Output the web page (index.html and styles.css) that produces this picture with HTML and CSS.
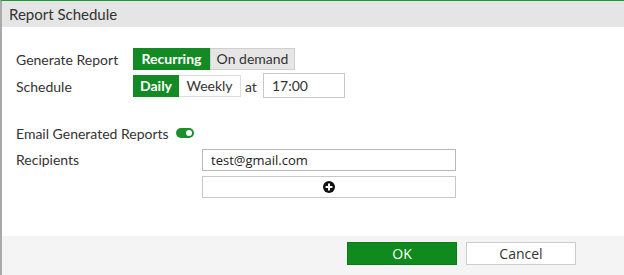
FILE: index.html
```html
<!DOCTYPE html>
<html>
<head>
<meta charset="utf-8">
<link rel="stylesheet" href="styles.css">
</head>
<body>
<div class="dialog">
  <div class="header">Report Schedule</div>
  <div class="content">
    <div class="row">
      <div class="label">Generate Report</div>
      <div class="seg">
        <span class="opt active">Recurring</span><span class="opt grey">On demand</span>
      </div>
    </div>
    <div class="row row2">
      <div class="label">Schedule</div>
      <div class="seg">
        <span class="opt active small">Daily</span><span class="opt white">Weekly</span>
      </div>
      <span class="at">at</span>
      <div class="time">17:00</div>
    </div>
    <div class="row email">
      <div class="label auto">Email Generated Reports</div>
      <span class="toggle"><span class="knob"></span></span>
    </div>
    <div class="recip">
      <div class="label wide">Recipients</div>
      <div class="recip-col">
        <div class="field">test@gmail.com</div>
        <div class="addbox">
          <svg width="12" height="12" viewBox="0 0 12 12"><circle cx="6" cy="6" r="6" fill="#111"/><path d="M6 2.6v6.8M2.6 6h6.8" stroke="#fff" stroke-width="2"/></svg>
        </div>
      </div>
    </div>
  </div>
  <div class="footer">
    <button class="btn ok">OK</button>
    <button class="btn cancel">Cancel</button>
  </div>
</div>
</body>
</html>
```

FILE: styles.css
```css
html, body { margin: 0; padding: 0; background: #fff; }
body { width: 624px; height: 275px; overflow: hidden; font-family: Lato, "Liberation Sans", sans-serif; font-size: 14px; color: #333; }
.dialog { box-sizing: border-box; width: 624px; height: 275px; border-top: 1px solid #1f9a35; border-left: 2px solid #a9a9a9; display: flex; flex-direction: column; }
.header { height: 26px; line-height: 27px; background: #e5e5e5; padding-left: 7px; font-size: 15px; color: #333; }
.content { flex: 1; padding: 21px 0 0 14px; }
.row { display: flex; align-items: center; height: 22px; }
.row2 { margin-top: 5px; }
.label { width: 117px; flex: none; }
.label.auto { width: auto; margin-right: 7px; }
.seg { display: flex; height: 22px; }
.opt { box-sizing: border-box; height: 22px; line-height: 20px; padding: 0 8px; border: 1px solid #ccc; }
.opt.active { background: #138a24; border-color: #138a24; color: #fff; font-weight: bold; width: 77px; text-align: center; padding: 0; }
.opt.active.small { width: 46px; }
.opt.grey { background: #e6e6e6; border-color: #cfcfcf; width: 85px; text-align: center; padding: 0; }
.opt.white { background: #fff; border-color: #ddd; border-left: none; width: 62px; text-align: center; padding: 0; }
.at { margin-left: 4px; width: 18px; }
.time { box-sizing: border-box; width: 82px; height: 25px; line-height: 23px; border: 1px solid #c8c8c8; padding-left: 8px; margin-top: -1px; }
.email { margin-top: 25px; height: 22px; }
.toggle { position: relative; display: inline-block; width: 18px; height: 10px; border-radius: 5px; background: #1b8f2c; }
.knob { position: absolute; right: 2px; top: 2px; width: 6px; height: 6px; border-radius: 50%; background: #fff; }
.recip { display: flex; margin-top: 5px; }
.label.wide { width: 186px; line-height: 22px; }
.recip-col { display: flex; flex-direction: column; gap: 5px; }
.field { box-sizing: border-box; width: 254px; height: 22px; line-height: 20px; border: 1px solid #b8b8b8; padding-left: 8px; font-family: "Open Sans", "Liberation Sans", sans-serif; font-size: 13px; color: #222; }
.addbox { box-sizing: border-box; width: 254px; height: 22px; border: 1px solid #c8c8c8; display: flex; align-items: center; justify-content: center; }
.addbox svg { display: block; }
.footer { height: 39px; background: #f4f4f4; display: flex; justify-content: flex-end; align-items: flex-start; padding: 6px 48px 0 0; box-sizing: border-box; gap: 9px; }
.btn { box-sizing: border-box; width: 110px; height: 23px; font-family: "Open Sans", "Liberation Sans", sans-serif; font-size: 14px; padding: 0; margin: 0; }
.btn.ok { background: #10891e; border: 1px solid #0c7a18; color: #fff; }
.btn.cancel { background: #fff; border: 1px solid #ccc; color: #333; }
```
